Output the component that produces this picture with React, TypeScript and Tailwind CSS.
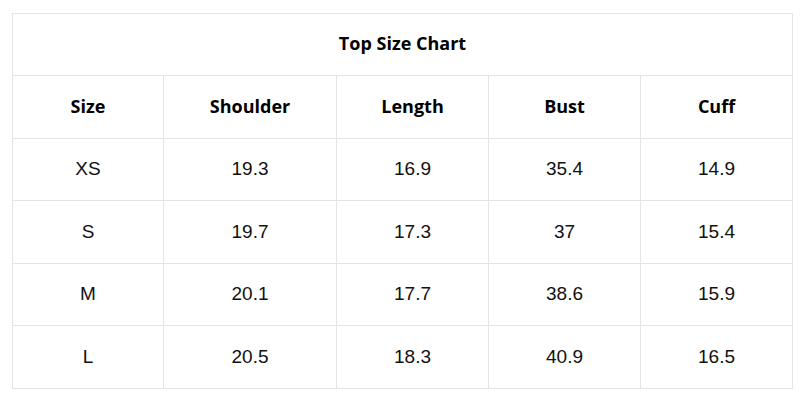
import React from "react";

const headers = ["Size", "Shoulder", "Length", "Bust", "Cuff"];
const rows = [
  ["XS", "19.3", "16.9", "35.4", "14.9"],
  ["S", "19.7", "17.3", "37", "15.4"],
  ["M", "20.1", "17.7", "38.6", "15.9"],
  ["L", "20.5", "18.3", "40.9", "16.5"],
];
const widths = ["w-[151px]", "w-[173px]", "w-[152px]", "w-[152px]", "w-[152px]"];

export default function App() {
  return (
    <div className="w-[800px] h-[400px] bg-white pl-[12px] pt-[13px]">
      <table className="border-collapse w-[781px] table-fixed">
        <colgroup>
          {widths.map((w, i) => (
            <col key={i} className={w} />
          ))}
        </colgroup>
        <thead>
          <tr className="h-[62px]">
            <th
              colSpan={5}
              className="border border-[#e4e4e4] text-center font-bold text-[18px] text-black pb-[2px] [font-family:'Open_Sans',sans-serif]"
            >
              Top Size Chart
            </th>
          </tr>
          <tr className="h-[63px]">
            {headers.map((h) => (
              <th
                key={h}
                className="border border-[#e4e4e4] text-center font-bold text-[18px] text-black pb-[2px] [font-family:'Open_Sans',sans-serif]"
              >
                {h}
              </th>
            ))}
          </tr>
        </thead>
        <tbody>
          {rows.map((r, ri) => (
            <tr key={ri} className={ri % 2 === 0 ? "h-[62px]" : "h-[63px]"}>
              {r.map((c, ci) => (
                <td
                  key={ci}
                  className="border border-[#e4e4e4] text-center text-[19px] text-[#111] [font-family:'Liberation_Sans',Arial,sans-serif]"
                >
                  {c}
                </td>
              ))}
            </tr>
          ))}
        </tbody>
      </table>
    </div>
  );
}
